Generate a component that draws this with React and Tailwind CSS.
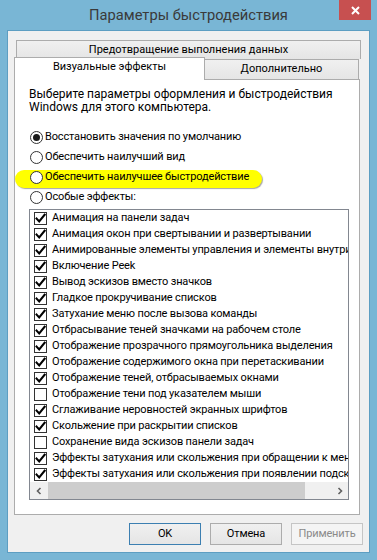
import React from "react";

const items = [
  ["Анимация на панели задач", true],
  ["Анимация окон при свертывании и развертывании", true],
  ["Анимированные элементы управления и элементы внутри окна", true],
  ["Включение Peek", true],
  ["Вывод эскизов вместо значков", true],
  ["Гладкое прокручивание списков", true],
  ["Затухание меню после вызова команды", true],
  ["Отбрасывание теней значками на рабочем столе", true],
  ["Отображение прозрачного прямоугольника выделения", true],
  ["Отображение содержимого окна при перетаскивании", true],
  ["Отображение теней, отбрасываемых окнами", true],
  ["Отображение тени под указателем мыши", false],
  ["Сглаживание неровностей экранных шрифтов", true],
  ["Скольжение при раскрытии списков", true],
  ["Сохранение вида эскизов панели задач", false],
  ["Эффекты затухания или скольжения при обращении к меню", true],
  ["Эффекты затухания или скольжения при появлении подсказок", true],
];

const radios = [
  ["Восстановить значения по умолчанию", true],
  ["Обеспечить наилучший вид", false],
  ["Обеспечить наилучшее быстродействие", false],
  ["Особые эффекты:", false],
];

function Check({ checked }) {
  return (
    <span className="w-[13px] h-[13px] border border-[#333333] bg-white flex items-center justify-center shrink-0">
      {checked && (
        <svg width="11" height="11" viewBox="0 0 11 11">
          <path d="M1.6 5.6 L4.2 8.4 L9.6 1.8" fill="none" stroke="#000" strokeWidth="2.1" strokeLinecap="square" />
        </svg>
      )}
    </span>
  );
}

function Radio({ selected }) {
  return (
    <span className="w-[13px] h-[13px] rounded-full border border-[#333333] bg-white flex items-center justify-center shrink-0">
      {selected && <span className="w-[7px] h-[7px] rounded-full bg-[#1a1a1a]" />}
    </span>
  );
}

export default function App() {
  return (
    <div className="w-[377px] h-[560px] bg-[#79b6d5] flex flex-col font-[Roboto,sans-serif] text-[11px] tracking-[-0.15px] text-black overflow-hidden">
      {/* title bar */}
      <div className="h-[30px] grid grid-cols-[1fr_auto_1fr] shrink-0">
        <div />
        <div className="text-[14.7px] tracking-normal text-[#3a3a3a] leading-[30px]">Параметры быстродействия</div>
        <div className="flex justify-end pr-[6px]">
          <div className="w-[32px] h-[20px] bg-[#c75050] flex items-center justify-center">
            <svg width="9" height="9" viewBox="0 0 9 9">
              <path d="M1 1 L8 8 M8 1 L1 8" stroke="#fff" strokeWidth="2" />
            </svg>
          </div>
        </div>
      </div>
      {/* client */}
      <div className="ml-[7px] w-[363px] h-[523px] border border-[#5d9ec2] bg-[#f0f0f0] flex flex-col shrink-0">
        {/* tab row 1 */}
        <div className="mt-[9px] ml-[8px] w-[345px] h-[19px] border border-b-0 border-[#acacac] bg-gradient-to-b from-[#f0f0f0] to-[#e5e5e5] text-center leading-[18px] tracking-normal">
          Предотвращение выполнения данных
        </div>
        {/* tab row 2 */}
        <div className="flex items-start -mt-[2px]">
          <div className="relative z-10 ml-[6px] w-[191px] h-[23px] -mb-[1px] border border-b-0 border-[#acacac] bg-white text-center leading-[16px] pt-[1px] tracking-normal">
            Визуальные эффекты
          </div>
          <div className="mt-[2px] w-[154px] h-[20px] border-t border-r border-[#acacac] bg-gradient-to-b from-[#f0f0f0] to-[#e5e5e5] text-center leading-[18px] tracking-normal">
            Дополнительно
          </div>
        </div>
        {/* panel */}
        <div className="ml-[6px] w-[346px] h-[436px] border border-[#acacac] bg-white flex flex-col">
          <div className="pl-[14px] pt-[8px] leading-[13px] text-[12px] tracking-normal">
            <div>Выберите параметры оформления и быстродействия</div>
            <div>Windows для этого компьютера.</div>
          </div>
          <div className="relative mt-[13px]">
            <div className="absolute left-0 top-[43px] w-[247px] h-[18px] rounded-full bg-[#ffff00] shadow-[1px_1px_1px_rgba(0,0,0,0.35)]" />
            {radios.map(([t, s]) => (
              <div key={t} className="relative h-[20px] flex items-center pl-[15px] gap-[2px]">
                <Radio selected={s} />
                <span className="whitespace-nowrap">{t}</span>
              </div>
            ))}
          </div>
          <div className="mt-[2px] ml-[14px] w-[320px] h-[291px] border border-[#828790] flex flex-col overflow-hidden">
            {items.map(([t, c]) => (
              <div key={t} className="h-[16px] flex items-center pl-[4px] gap-[5px] whitespace-nowrap shrink-0">
                <Check checked={c} />
                <span>{t}</span>
              </div>
            ))}
            <div className="h-[17px] flex bg-[#f0f0f0] shrink-0">
              <div className="w-[17px] flex items-center justify-center">
                <svg width="6" height="8" viewBox="0 0 6 8">
                  <path d="M4.5 1 L1.5 4 L4.5 7" fill="none" stroke="#606060" strokeWidth="1.6" />
                </svg>
              </div>
              <div className="ml-[1px] w-[257px] bg-[#cdcdcd]" />
              <div className="flex-1" />
              <div className="w-[17px] flex items-center justify-center">
                <svg width="6" height="8" viewBox="0 0 6 8">
                  <path d="M1.5 1 L4.5 4 L1.5 7" fill="none" stroke="#606060" strokeWidth="1.6" />
                </svg>
              </div>
            </div>
          </div>
        </div>
        {/* buttons */}
        <div className="mt-[8px] flex justify-end gap-[9px] pr-[6px]">
          <div className="w-[72px] h-[22px] border border-[#3c7fb1] bg-gradient-to-b from-[#f0f0f0] to-[#e5e5e5] flex items-center justify-center">OK</div>
          <div className="w-[72px] h-[22px] border border-[#acacac] bg-gradient-to-b from-[#f0f0f0] to-[#e5e5e5] flex items-center justify-center">Отмена</div>
          <div className="w-[72px] h-[22px] border border-[#c5c5c5] bg-[#f4f4f4] text-[#8a8a8a] flex items-center justify-center">Применить</div>
        </div>
      </div>
    </div>
  );
}
